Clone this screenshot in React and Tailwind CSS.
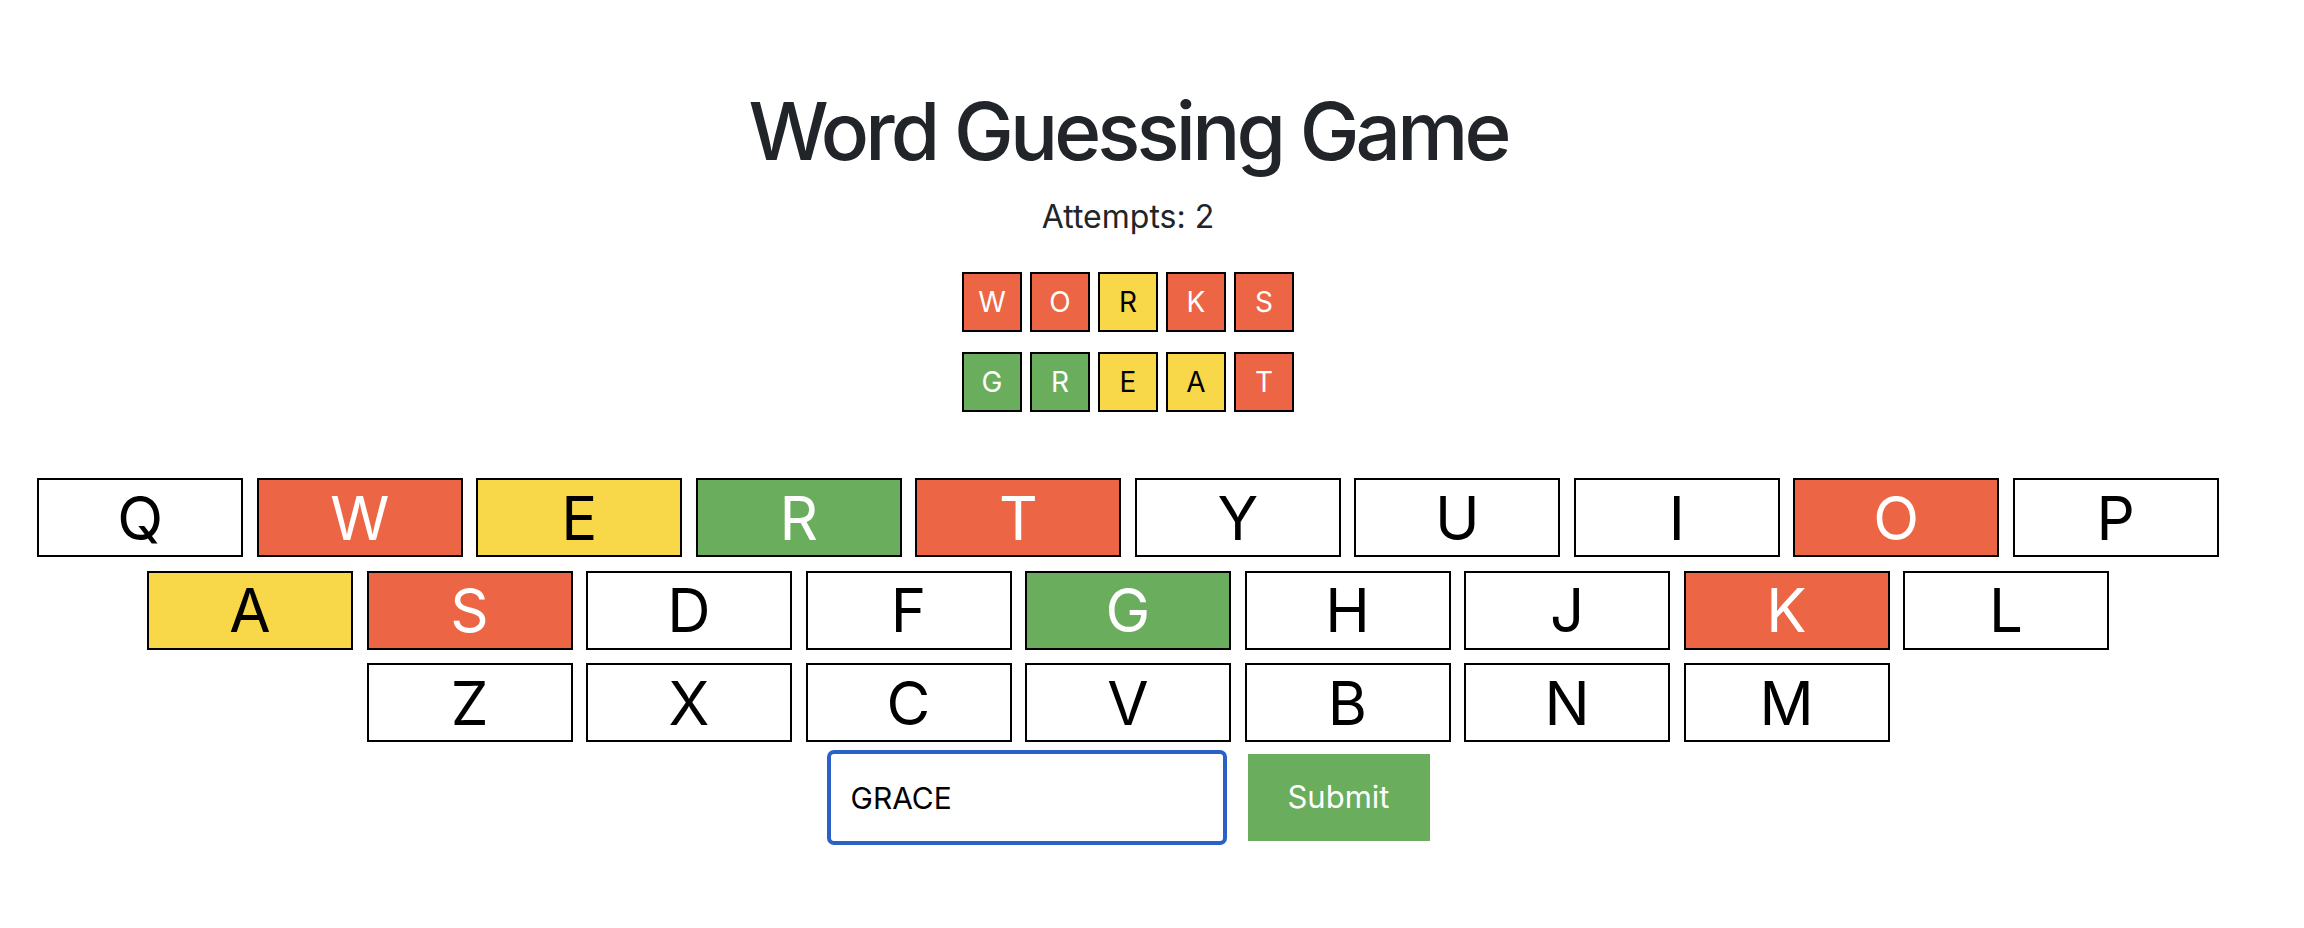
import React from 'react'

const GUESSES = [
  [['W', 'red'], ['O', 'red'], ['R', 'yellow'], ['K', 'red'], ['S', 'red']],
  [['G', 'green'], ['R', 'green'], ['E', 'yellow'], ['A', 'yellow'], ['T', 'red']],
]

const KEY_ROWS = ['QWERTYUIOP', 'ASDFGHJKL', 'ZXCVBNM']

const KEY_STATE = {
  W: 'red', E: 'yellow', R: 'green', T: 'red', O: 'red',
  A: 'yellow', S: 'red', G: 'green', K: 'red',
}

const COLORS = {
  red: 'bg-[#ec6544] text-white',
  yellow: 'bg-[#f8d849] text-black',
  green: 'bg-[#69ad5d] text-white',
  none: 'bg-white text-black',
}

function Tile({ letter, state }) {
  return (
    <div className={`w-[60px] h-[60px] flex items-center justify-center border-2 border-black text-[28px] leading-none ${COLORS[state]}`}>
      {letter}
    </div>
  )
}

function Key({ letter }) {
  const state = KEY_STATE[letter] || 'none'
  return (
    <button className={`w-[206px] h-[79px] flex items-center justify-center border-2 border-black text-[60px] leading-none ${COLORS[state]}`}>
      {letter}
    </button>
  )
}

export default function App() {
  return (
    <div
      className="w-[2256px] min-h-[928px] bg-white flex flex-col items-center pt-[83px] text-[#212529]"
      style={{ fontFamily: 'Inter, "Noto Sans", sans-serif' }}
    >
      <h1 className="text-[80px] leading-[96px] font-medium tracking-[-0.048em]">Word Guessing Game</h1>
      <p className="mt-[14px] text-[32px] leading-[48px]">Attempts: 2</p>

      {/* guesses */}
      <div className="mt-[31px] flex flex-col gap-[20px]">
        {GUESSES.map((row, i) => (
          <div key={i} className="flex gap-[8px]">
            {row.map(([l, s], j) => (
              <Tile key={j} letter={l} state={s} />
            ))}
          </div>
        ))}
      </div>

      {/* keyboard */}
      <div className="mt-[66px] flex flex-col items-center gap-[13.5px]">
        {KEY_ROWS.map(row => (
          <div key={row} className="flex gap-[13.5px]">
            {row.split('').map(l => (
              <Key key={l} letter={l} />
            ))}
          </div>
        ))}
      </div>

      {/* input */}
      <div className="mt-[8px] flex items-center gap-[21px]">
        <input
          readOnly
          value="GRACE"
          className="w-[400px] h-[95px] border-4 border-[#2a60c8] rounded-[7px] px-[20px] text-[30px] text-black outline-none"
        />
        <button className="w-[182px] h-[87px] bg-[#69ad5d] text-white text-[31px]">
          Submit
        </button>
      </div>
    </div>
  )
}
